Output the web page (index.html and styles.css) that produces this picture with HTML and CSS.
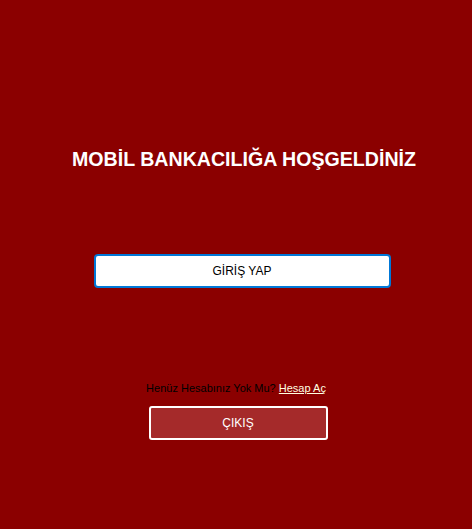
FILE: index.html
```html
<!DOCTYPE html>
<html lang="tr">
<head>
<meta charset="utf-8">
<link rel="stylesheet" href="styles.css">
</head>
<body>
<div class="page">
  <h1 class="title">MOBİL BANKACILIĞA HOŞGELDİNİZ</h1>
  <button class="login">GİRİŞ YAP</button>
  <p class="signup">Henüz Hesabınız Yok Mu? <a href="#">Hesap Aç</a></p>
  <button class="exit">ÇIKIŞ</button>
</div>
</body>
</html>
```
FILE: styles.css
```css
html, body {
  margin: 0;
  padding: 0;
  background: #8b0000;
  height: 100%;
}
body {
  font-family: "Liberation Sans", Arial, sans-serif;
}
.page {
  display: flex;
  flex-direction: column;
  align-items: center;
  padding-top: 148px;
}
.title {
  margin: 0 0 0 16px;
  font-size: 19.6px;
  font-weight: bold;
  color: #fff;
  line-height: 22px;
}
.login {
  margin: 84px 0 0 12px;
  width: 297px;
  height: 34px;
  background: #fff;
  border: 2px solid #0078d7;
  border-radius: 4px;
  font-family: "Liberation Sans", Arial, sans-serif;
  font-size: 12px;
  color: #000;
}
.signup {
  margin: 93px 0 0 0;
  font-size: 11px;
  line-height: 14px;
  color: #000;
}
.signup a {
  color: #ffffe0;
}
.exit {
  margin: 11px 0 0 4px;
  width: 179px;
  height: 34px;
  background: #a52a2a;
  border: 2px solid #fff;
  border-radius: 3px;
  font-family: "Liberation Sans", Arial, sans-serif;
  font-size: 12px;
  color: #fff;
}
```
